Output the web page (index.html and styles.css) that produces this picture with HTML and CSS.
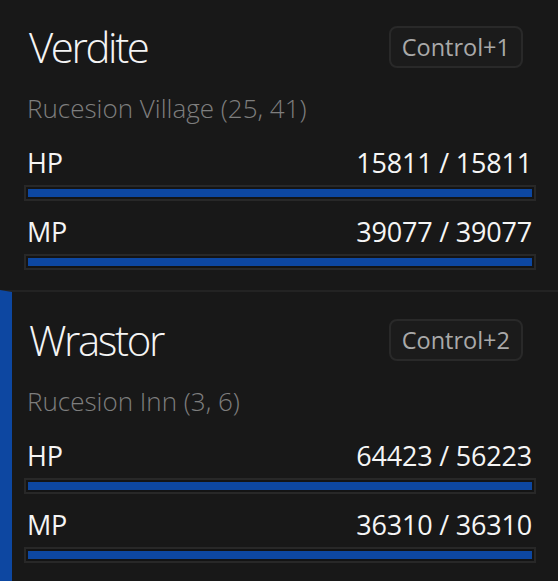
FILE: index.html
```html
<!DOCTYPE html>
<html lang="en">
<head>
<meta charset="utf-8">
<title>Characters</title>
<link rel="stylesheet" href="styles.css">
</head>
<body>
<div class="list">
  <section class="card">
    <div class="card-head">
      <h1 class="name">Verdite</h1>
      <span class="hotkey">Control+1</span>
    </div>
    <div class="location">Rucesion Village (25, 41)</div>
    <div class="stat">
      <div class="stat-head"><span>HP</span><span>15811 / 15811</span></div>
      <div class="track"><div class="fill" style="width:100%"></div></div>
    </div>
    <div class="stat">
      <div class="stat-head"><span>MP</span><span>39077 / 39077</span></div>
      <div class="track"><div class="fill" style="width:100%"></div></div>
    </div>
  </section>
  <section class="card active">
    <div class="card-head">
      <h1 class="name">Wrastor</h1>
      <span class="hotkey">Control+2</span>
    </div>
    <div class="location">Rucesion Inn (3, 6)</div>
    <div class="stat">
      <div class="stat-head"><span>HP</span><span>64423 / 56223</span></div>
      <div class="track"><div class="fill" style="width:100%"></div></div>
    </div>
    <div class="stat">
      <div class="stat-head"><span>MP</span><span>36310 / 36310</span></div>
      <div class="track"><div class="fill" style="width:100%"></div></div>
    </div>
  </section>
</div>
</body>
</html>
```
FILE: styles.css
```css
html, body {
  margin: 0;
  padding: 0;
  background: #181818;
  font-family: "Open Sans", "Noto Sans", sans-serif;
  color: #f2f2f2;
}

.list {
  display: flex;
  flex-direction: column;
}

.card {
  border-left: 12px solid transparent;
  padding: 20px 22px 20px 12px;
}

.card:first-child {
  padding-top: 19px;
}

.card + .card {
  border-top: 2px solid #232323;
}

.card.active {
  border-left-color: #0d47a1;
}

.card-head {
  display: flex;
  align-items: center;
  justify-content: space-between;
}

.name {
  margin: 0;
  padding-left: 5px;
  font-size: 42px;
  font-weight: 300;
  line-height: 56px;
  letter-spacing: -2.4px;
  color: #f4f4f4;
}

.hotkey {
  box-sizing: border-box;
  height: 42px;
  display: flex;
  align-items: center;
  padding: 0 11px;
  margin-right: 13px;
  border: 2px solid #292929;
  border-radius: 8px;
  background: #1b1b1b;
  color: #a9a9a9;
  font-size: 23.5px;
}

.location {
  margin-top: 16px;
  padding-left: 3px;
  font-size: 26px;
  font-weight: 300;
  line-height: 34px;
  color: #7e7e7e;
}

.stat {
  margin-top: 20px;
}

.stat + .stat {
  margin-top: 13px;
}

.stat-head {
  display: flex;
  justify-content: space-between;
  padding: 0 4px 0 3px;
  font-size: 27px;
  line-height: 36px;
  letter-spacing: -0.2px;
  color: #f5f5f5;
}

.track {
  margin-top: 4px;
  height: 16px;
  box-sizing: border-box;
  border: 2px solid #282828;
  padding: 2px;
  background: #141414;
}

.fill {
  height: 8px;
  background: #0d47a1;
}
```
